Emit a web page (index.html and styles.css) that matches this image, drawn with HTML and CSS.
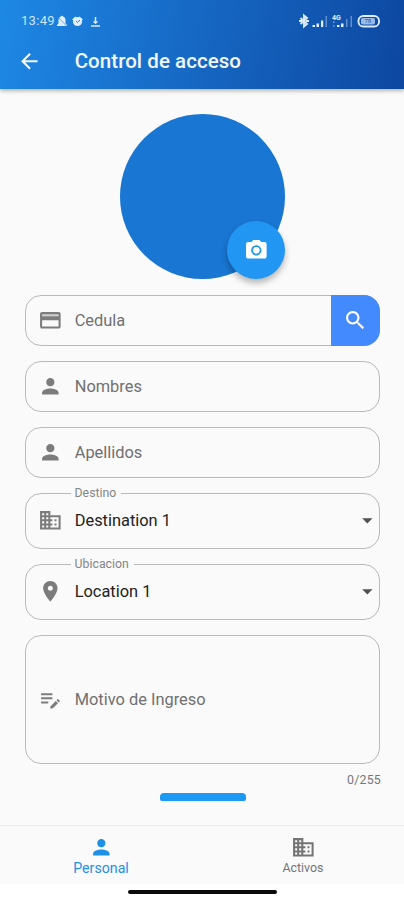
FILE: index.html
```html
<!DOCTYPE html>
<html lang="es">
<head>
<meta charset="utf-8">
<meta name="viewport" content="width=device-width, initial-scale=1">
<title>Control de acceso</title>
<link rel="stylesheet" href="styles.css">
</head>
<body>
<svg class="defs" aria-hidden="true">
  <symbol id="person" viewBox="0 0 24 24"><path d="M12 12c2.210 0 4-1.790 4-4s-1.790-4-4-4-4 1.790-4 4 1.790 4 4 4zm0 2c-2.670 0-8 1.340-8 4v2h16v-2c0-2.660-5.330-4-8-4z"/></symbol>
  <symbol id="building" viewBox="0 0 24 24"><path d="M12 7V3H2v18h20V7H12zM6 19H4v-2h2v2zm0-4H4v-2h2v2zm0-4H4V9h2v2zm0-4H4V5h2v2zm4 12H8v-2h2v2zm0-4H8v-2h2v2zm0-4H8V9h2v2zm0-4H8V5h2v2zm10 12h-8v-2h2v-2h-2v-2h2v-2h-2V9h8v10zm-2-8h-2v2h2v-2zm0 4h-2v2h2v-2z"/></symbol>
</svg>
<div class="screen">
  <header class="header">
    <div class="status">
      <span class="time">13:49</span>
      <svg class="status-left" viewBox="0 0 44 14">
        <path d="M0 12v-1l1.500-1.500V6c0-2 1-3 2.500-3.500 0-1 2-1 2 0C7.500 3 8.500 4 8.500 6v3.500L10 11v1z"/>
        <path class="slash" d="M1 3l8.500 9"/>
        <circle cx="20.500" cy="7.500" r="4.600"/><path d="M15 5.500l3.500-3 1 1-3 3zM26 5.500l-3.500-3-1 1 3 3z"/>
        <path class="cut" d="M19 7l1.500 1.500L23 6"/>
        <path class="line" d="M38.500 3v6M36.500 7.500l2 1.500 2-1.500M34 12h9"/>
      </svg>
      <svg class="status-right" viewBox="0 0 84 16">
        <path class="line bt" d="M1.500 5l6.500 6-3 2.500v-11l3 2.500-6.500 6M0 8h3M7 8h3"/>
        <path d="M13.500 12H16v2h-2.500zM17.500 10.500H20V14h-2.500zM22 7.500h2.200V14H22z"/><path class="dim" d="M26.500 3H28v11h-1.500z"/>
        <text x="33" y="6.500" class="net">4G</text>
        <path d="M38 12h2.500v2H38zM42 10.500h2.500V14H42z"/><path class="dim" d="M34 8h1.500v2H34zM34 12h1.500v2H34zM47 6h1.500v8H47zM51.500 3H53v11h-1.500z"/>
        <rect class="cell" x="59.500" y="3" width="20.500" height="10.500" rx="4.800"/><rect class="charge" x="62" y="5" width="14" height="6.500" rx="2"/>
        <text x="65.500" y="10.400" class="pct">78</text>
      </svg>
    </div>
    <div class="toolbar">
      <svg class="icon back" viewBox="0 0 24 24"><path d="M20 11H7.830l5.590-5.590L12 4l-8 8 8 8 1.410-1.410L7.830 13H20v-2z"/></svg>
      <h1>Control de acceso</h1>
    </div>
  </header>
  <main class="content">
    <div class="avatar">
      <button class="camera" aria-label="Foto"><svg class="icon" viewBox="0 0 24 24"><path fill-rule="evenodd" d="M9 2L7.170 4H4c-1.100 0-2 .9-2 2v12c0 1.100.9 2 2 2h16c1.100 0 2-.9 2-2V6c0-1.100-.9-2-2-2h-3.170L15 2H9zm3 15c-2.760 0-5-2.240-5-5s2.240-5 5-5 5 2.240 5 5-2.240 5-5 5z"/><circle cx="12" cy="12" r="3.200"/></svg></button>
    </div>
    <form class="form">
      <div class="field">
        <svg class="icon" viewBox="0 0 24 24"><path d="M20 4H4c-1.110 0-2 .89-2 2v12c0 1.110.89 2 2 2h16c1.110 0 2-.89 2-2V6c0-1.110-.89-2-2-2zm0 14H4v-6h16v6zm0-10H4V6h16v2z"/><path class="card-top" d="M4 6h16v2H4z"/></svg>
        <span class="label">Cedula</span>
        <button type="button" class="search" aria-label="Buscar"><svg class="icon" viewBox="0 0 24 24"><path d="M15.500 14h-.79l-.28-.27C15.410 12.590 16 11.110 16 9.500 16 5.910 13.090 3 9.500 3S3 5.910 3 9.500 5.910 16 9.500 16c1.610 0 3.090-.59 4.230-1.570l.27.28v.79l5 4.990L20.490 19l-4.990-5zm-6 0C7.010 14 5 11.990 5 9.500S7.010 5 9.500 5 14 7.010 14 9.500 11.990 14 9.500 14z"/></svg></button>
      </div>
      <div class="field"><svg class="icon"><use href="#person"/></svg><span class="label">Nombres</span></div>
      <div class="field"><svg class="icon"><use href="#person"/></svg><span class="label">Apellidos</span></div>
      <div class="field select">
        <span class="legend">Destino</span>
        <svg class="icon"><use href="#building"/></svg><span class="value">Destination 1</span><svg class="icon caret" viewBox="0 0 24 24"><path d="M7 10l5 5 5-5z"/></svg>
      </div>
      <div class="field select">
        <span class="legend">Ubicacion</span>
        <svg class="icon" viewBox="0 0 24 24"><path d="M12 2C8.130 2 5 5.130 5 9c0 5.250 7 13 7 13s7-7.750 7-13c0-3.870-3.130-7-7-7zm0 9.500c-1.380 0-2.500-1.120-2.500-2.500s1.120-2.500 2.500-2.500 2.500 1.120 2.500 2.500-1.120 2.500-2.500 2.500z"/></svg><span class="value">Location 1</span><svg class="icon caret" viewBox="0 0 24 24"><path d="M7 10l5 5 5-5z"/></svg>
      </div>
      <div class="field area"><svg class="icon" viewBox="0 0 24 24"><path d="M3 10h11v2H3zM3 6h11v2H3zM3 14h7v2H3zM18.010 12.870l.71-.71c.39-.39 1.020-.39 1.410 0l.71.71c.39.39.39 1.020 0 1.410l-.71.71zM17.300 13.580l-5.300 5.300V21h2.120l5.300-5.300z"/></svg><span class="label">Motivo de Ingreso</span></div>
    </form>
    <div class="counter">0/255</div>
    <div class="submit"></div>
  </main>
  <nav class="tabs">
    <a class="tab active"><svg class="icon"><use href="#person"/></svg><span>Personal</span></a>
    <a class="tab"><svg class="icon"><use href="#building"/></svg><span>Activos</span></a>
  </nav>
  <div class="gesture"><div class="pill"></div></div>
</div>
</body>
</html>
```
FILE: styles.css
```css
* { box-sizing: border-box; }
body { margin: 0; font-family: Roboto, sans-serif; background: #fafafa; }
button { border: 0; padding: 0; }
.defs { position: absolute; width: 0; height: 0; }
.screen { width: 404px; height: 900px; display: flex; flex-direction: column; overflow: hidden; }
.icon { width: 24.700px; height: 24.700px; flex: none; fill: currentColor; display: block; }

.header { height: 89.400px; flex: none; color: #f1f8ff; background: linear-gradient(100deg, #1e88e5, #1565c0 53%, #0d47a1); box-shadow: 0 2px 4px rgba(0,0,0,.28); }
.status { height: 36px; padding: 5px 21px 0; display: flex; align-items: center; }
.time { font-size: 13px; letter-spacing: .3px; width: 36px; color: #cfe5fa; }
.status svg { fill: #e0eefc; }
.status-left { width: 44px; height: 14px; }
.status-right { width: 84px; height: 16px; margin-left: auto; }
.status .line { fill: none; stroke: #dcecfb; stroke-width: 1.500; }
.status .bt { stroke-width: 1.900; }
.status .slash { stroke: #2583db; stroke-width: .6; }
.status .cut { fill: none; stroke: #2380d8; stroke-width: 1; }
.dim { opacity: .4; }
.net { font-size: 7px; font-weight: 700; }
.status .cell { fill: none; stroke: #dcecfb; stroke-width: 1.900; }
.status .charge { fill: #9dbce5; }
.status .pct { font-size: 6px; fill: #1656ad; }
.toolbar { display: flex; align-items: center; height: 50px; padding-left: 17px; gap: 33px; }
h1 { margin: 0; font-size: 20.500px; line-height: 26px; font-weight: 500; letter-spacing: .05px; }

.content { flex: 1; min-height: 0; padding: 25px 24px 0 25px; display: flex; flex-direction: column; }
.avatar { width: 165px; height: 165px; flex: none; align-self: center; border-radius: 50%; background: #1976d2; display: flex; justify-content: flex-end; align-items: flex-end; }
.camera { width: 58px; height: 58px; border-radius: 50%; background: #2196f3; color: #fff; display: grid; place-items: center; box-shadow: 0 4px 6px rgba(0,0,0,.28); }
.form { margin-top: 15.200px; display: flex; flex-direction: column; gap: 15px; }
.field { height: 51px; border: 1px solid #b9b9b9; border-radius: 16px; display: flex; align-items: center; padding-left: 11.500px; color: #7c7c7c; position: relative; }
.label, .value { margin-left: 12.500px; margin-top: 1px; font-size: 16.400px; line-height: 20px; letter-spacing: 0; color: #707070; }
.value { color: #222; margin-top: 0; }
.card-top { opacity: .35; }
.search { width: 49px; height: 51px; margin: -1px -1px -1px auto; background: #448aff; color: #fff; border-radius: 0 16px 16px 0; display: grid; place-items: center; }
.select { height: 56px; }
.select .caret { margin-top: -1px; }
.legend { position: absolute; left: 45px; top: -8px; padding: 0 5px 0 3.500px; background: #fafafa; font-size: 12.300px; line-height: 14px; letter-spacing: .02px; color: #858585; }
.caret { margin-left: auto; margin-right: -1px; color: #505050; }
.area { height: 129px; }
.counter { align-self: flex-end; margin-top: 9px; margin-right: -1px; font-size: 12.400px; line-height: 14px; letter-spacing: .2px; color: #777; }
.submit { width: 86px; height: 8.500px; margin-top: 6px; align-self: center; background: #1c98f5; border-radius: 4px 4px 2px 2px; flex: none; }

.tabs { height: 59px; flex: none; border-top: 1px solid #ececec; display: flex; }
.tab { flex: 1; display: flex; flex-direction: column; align-items: center; padding-top: 8.500px; color: #757575; font-size: 12.400px; line-height: 18px; }
.active { color: #1e90e8; font-size: 14.200px; }
.gesture { height: 16px; flex: none; background: #fff; display: flex; justify-content: center; padding-top: 6px; }
.pill { width: 149px; height: 4px; border-radius: 2px; background: #0a0a0a; }
```
